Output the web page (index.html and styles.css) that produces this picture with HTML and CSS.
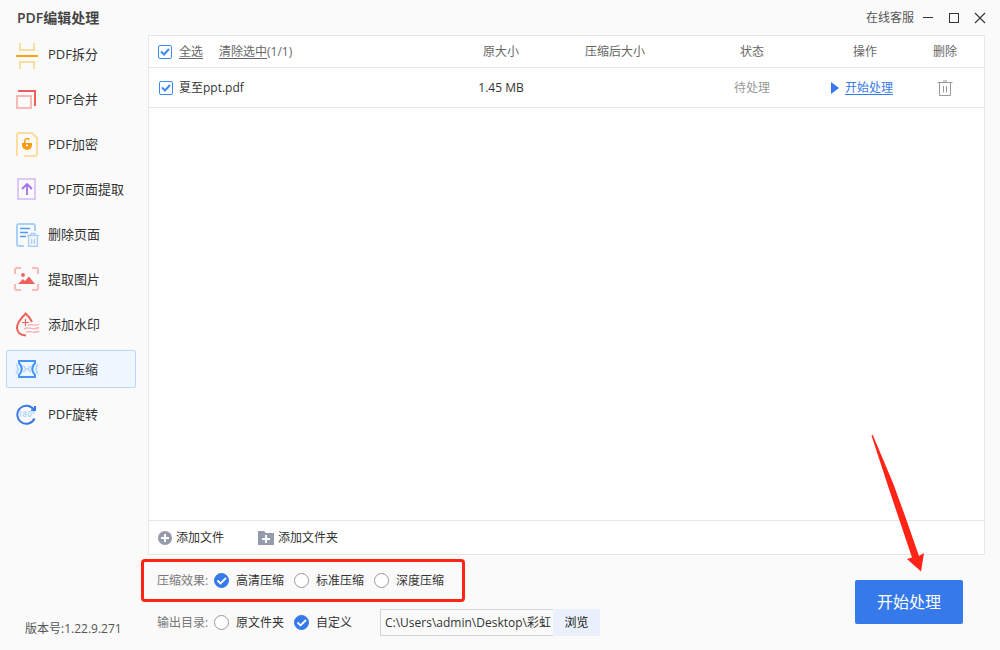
FILE: index.html
```html
<!DOCTYPE html>
<html lang="zh-CN">
<head>
<meta charset="utf-8">
<title>PDF编辑处理</title>
<link rel="stylesheet" href="styles.css">
</head>
<body>
<div class="app">
  <header class="titlebar">
    <h1 class="app-title">PDF编辑处理</h1>
    <div class="window-tools">
      <a class="support" href="#support">在线客服</a>
      <button class="win-btn" type="button" aria-label="最小化"><svg width="12" height="12" viewBox="0 0 12 12"><path d="M1 5.5H11" stroke="#333"/></svg></button>
      <button class="win-btn" type="button" aria-label="最大化"><svg width="12" height="12" viewBox="0 0 12 12"><rect x="1.5" y="1.5" width="9" height="9" fill="none" stroke="#333"/></svg></button>
      <button class="win-btn" type="button" aria-label="关闭"><svg width="12" height="12" viewBox="0 0 12 12"><path d="M1 1L11 11M11 1L1 11" stroke="#333" stroke-width="1.1"/></svg></button>
    </div>
  </header>

  <div class="body">
    <aside class="sidebar">
      <nav class="nav">
        <a class="nav-item" href="#split">
          <svg class="nav-icon" viewBox="0 0 26 28" fill="none" stroke-width="2"><path d="M6 3V10H20V3M6 29V22H20V29" stroke="#fddc9f"/><path d="M2 16H24" stroke="#fca311"/></svg>PDF拆分</a>
        <a class="nav-item" href="#merge">
          <svg class="nav-icon" viewBox="0 0 26 28" fill="none" stroke-width="2"><rect x="3" y="11" width="14" height="12" stroke="#f9b9b9"/><path d="M4 6H21V21" stroke="#ef5f59"/></svg>PDF合并</a>
        <a class="nav-item" href="#encrypt">
          <svg class="nav-icon" viewBox="0 0 26 28" fill="none"><path d="M3 26V5Q3 3 5 3H18L23 8V24Q23 26 21 26H10" stroke="#fddc9f" stroke-width="2"/><path d="M8 13H18V15A5 5 0 0 1 8 15Z" fill="#fb9a0b"/><path d="M10.7 13V11A2.4 2.4 0 0 1 15.3 10" stroke="#fb9a0b" stroke-width="1.5"/><circle cx="13" cy="15.5" r="1.1" fill="#fff"/></svg>PDF加密</a>
        <a class="nav-item" href="#extract">
          <svg class="nav-icon" viewBox="0 0 26 28" fill="none" stroke-width="2"><rect x="4" y="4" width="17" height="20" stroke="#dcc9f8"/><path d="M13 20V9M8 14L13 9L18 14" stroke="#a671ee" stroke-width="1.8"/></svg>PDF页面提取</a>
        <a class="nav-item" href="#delete">
          <svg class="nav-icon" viewBox="0 0 26 28" fill="none"><path d="M10 26H5Q3 26 3 24V6Q3 4 5 4H19Q21 4 21 6V11" stroke="#a9d0fb" stroke-width="2"/><path d="M6 8.5H16M6 12.5H14M6 16.5H12" stroke="#4b9df8" stroke-width="1.3"/><path d="M13 15.5H25M17 15V13.5H21V15M14.6 16V26.3H23.4V16M17.6 18.5V24M20.4 18.5V24" stroke="#a9d0fb" stroke-width="1.4"/></svg>删除页面</a>
        <a class="nav-item" href="#images">
          <svg class="nav-icon" viewBox="0 0 26 28" fill="none"><path d="M1 9V5Q1 3 3 3H7M18 3H22Q24 3 24 5V9M24 19V23Q24 25 22 25H18M7 25H3Q1 25 1 23V19" stroke="#f9b9b9" stroke-width="2"/><path d="M4 19L9 14L11 16L15 11.5L21 19Z" fill="#f0625c"/><circle cx="9" cy="10" r="1.9" fill="#f0625c"/></svg>提取图片</a>
        <a class="nav-item" href="#watermark">
          <svg class="nav-icon" viewBox="0 0 26 28" fill="none"><path d="M18 12Q15.5 7 11.7 3.5Q3 12 3 18Q3.5 25 12 25.5" stroke="#ee605a" stroke-width="2"/><path d="M11.5 9V16M8 12.5H15" stroke="#ee605a" stroke-width="1.2"/><path d="M14 15.5C17 12.5 20 17.5 25 14M10 19C15 16 18 21 25 17.5M12 22.5C16 19.5 19 24.5 25 21" stroke="#f9b5b5" stroke-width="1.5"/></svg>添加水印</a>
        <a class="nav-item active" href="#compress" aria-current="page">
          <svg class="nav-icon" viewBox="0 0 26 28" fill="none"><path d="M5 6H21V8Q15.5 14 21 20V22H5V20Q10.5 14 5 8Z" stroke="#4396f5" stroke-width="2"/><path d="M2 9Q6 14 2 19M24 9Q20 14 24 19" stroke="#b5d6fb" stroke-width="1.8"/><path d="M9.5 11L12 14L9.5 17M16.5 11L14 14L16.5 17M12 14H14" stroke="#a9d0fb" stroke-width="1.2"/></svg>PDF压缩</a>
        <a class="nav-item" href="#rotate">
          <svg class="nav-icon" viewBox="0 0 26 28" fill="none"><path d="M20.5 18.5A9 9 0 1 1 20 10" stroke="#3a78e8" stroke-width="2"/><path d="M22 6V11H17V9.5H20V6Z" fill="#3a78e8"/><text class="degree" x="4" y="17">180°</text></svg>PDF旋转</a>
      </nav>
      <p class="version">版本号:1.22.9.271</p>
    </aside>

    <main class="main">
      <section class="panel">
        <table class="files">
          <colgroup><col><col class="c-size"><col class="c-after"><col class="c-state"><col class="c-action"><col class="c-delete"></colgroup>
          <thead>
            <tr>
              <th class="name-cell"><div class="name-wrap"><input class="check" type="checkbox" id="all" checked><label class="underlined" for="all">全选</label><span class="clear-group"><a class="underlined" href="#clear">清除选中</a>(1/1)</span></div></th>
              <th>原大小</th><th>压缩后大小</th><th>状态</th><th>操作</th><th>删除</th>
            </tr>
          </thead>
          <tbody>
            <tr>
              <td class="name-cell"><div class="name-wrap file"><input class="check" type="checkbox" id="file1" checked><label for="file1">夏至ppt.pdf</label></div></td>
              <td>1.45 MB</td><td></td><td class="pending">待处理</td>
              <td><a class="run" href="#run"><svg width="8" height="12" viewBox="0 0 8 12"><path d="M0 0L8 6L0 12Z" fill="#3579ea"/></svg><span class="underlined">开始处理</span></a></td>
              <td><button class="trash" type="button" aria-label="删除"><svg width="16" height="16" viewBox="0 0 16 16" fill="none" stroke="#999"><path d="M.5 2.5H15.5M6 1H10M2.5 3V15.5H13.5V3M6.5 6V12.5M9.5 6V12.5"/></svg></button></td>
            </tr>
          </tbody>
        </table>
        <div class="add-bar">
          <button class="add-btn" type="button"><svg width="14" height="14" viewBox="0 0 14 14"><circle cx="7" cy="7" r="7" fill="#959bad"/><path d="M7 3V11M3 7H11" stroke="#fff" stroke-width="2"/></svg>添加文件</button>
          <button class="add-btn" type="button"><svg width="16" height="14" viewBox="0 0 16 14"><path d="M0 0H6L8 2H16V14H0Z" fill="#959bad"/><path d="M8 4V12M4 8H12" stroke="#fff" stroke-width="2"/></svg>添加文件夹</button>
        </div>
      </section>

      <div class="settings">
        <form class="options">
          <div class="option-row" role="radiogroup" aria-label="压缩效果">
            <span class="row-label">压缩效果:</span>
            <label class="choice"><input type="radio" name="quality" checked>高清压缩</label>
            <label class="choice"><input type="radio" name="quality">标准压缩</label>
            <label class="choice"><input type="radio" name="quality">深度压缩</label>
            <span class="highlight"></span>
          </div>
          <div class="option-row" role="radiogroup" aria-label="输出目录">
            <span class="row-label">输出目录:</span>
            <label class="choice"><input type="radio" name="output">原文件夹</label>
            <label class="choice"><input type="radio" name="output" checked>自定义</label>
            <div class="path"><input class="path-input" type="text" aria-label="输出路径" value="C:\Users\admin\Desktop\彩虹"><button class="browse" type="button">浏览</button></div>
          </div>
        </form>
        <div class="start-wrap">
          <button class="start" type="button">开始处理</button>
          <svg class="arrow" width="56" height="138" viewBox="0 0 56 138"><path d="M.5 .5Q1 -.5 2 .5L22 48L33 78L48 121L53 118L50 136.500L36 124L41 122.500L26 78L16 48Z" fill="#ff2416"/></svg>
        </div>
      </div>
    </main>
  </div>
</div>
</body>
</html>
```
FILE: styles.css
```css
* { box-sizing: border-box; }
body {
  margin: 0;
  background: #fafafa;
  color: #333;
  font: 12px/18px "Open Sans", "Noto Sans CJK SC", sans-serif;
}
button, input { font: inherit; color: inherit; }
button { padding: 0; border: 0; background: none; cursor: pointer; }
a { color: inherit; text-decoration: none; }
svg { display: block; flex: none; }

.app { display: flex; flex-direction: column; min-height: 100vh; }
.titlebar { display: flex; justify-content: space-between; align-items: center; height: 35px; padding: 0 14px 0 17px; }
.app-title { margin: 0; font-size: 14px; font-weight: 600; color: #444; }
.window-tools { display: flex; align-items: center; gap: 14px; }
.support { color: #555; margin-right: -6px; }

.body { display: flex; flex: 1; }
.sidebar { display: flex; flex-direction: column; justify-content: space-between; flex: 0 0 148px; padding: 0 12px 12px 6px; }
.nav { display: flex; flex-direction: column; gap: 7px; }
.nav-item { display: flex; align-items: center; gap: 8px; height: 38px; padding: 0 7px; border: 1px solid transparent; border-radius: 2px; font-size: 13px; white-space: nowrap; }
.nav-item.active { background: #eff6ff; border-color: #bad7fb; }
.nav-icon { width: 26px; height: 28px; overflow: visible; }
.degree { font-size: 8px; font-weight: 600; fill: #a9d0fb; }
.version { margin: 0 0 0 19px; color: #555; }

.main { display: flex; flex-direction: column; flex: 1; min-width: 0; padding-right: 15px; }
.panel { display: flex; flex-direction: column; justify-content: space-between; flex: 1; background: #fff; border: 1px solid #e6e6e6; }
.files { width: 100%; table-layout: fixed; border-collapse: separate; border-spacing: 0; }
.c-size { width: 98px; }
.c-after { width: 130px; }
.c-state { width: 144px; }
.c-action { width: 82px; }
.c-delete { width: 78px; }
.files th, .files td { padding: 0; text-align: center; border-bottom: 1px solid #e6e6e6; }
.files th { height: 32px; font-weight: 400; color: #666; }
.files td { height: 40px; }
.name-wrap { display: flex; align-items: center; gap: 7px; padding-left: 9px; }
.name-wrap.file { padding-left: 10px; gap: 6px; }
.clear-group { margin-left: 9px; }
.underlined { text-decoration: underline; text-underline-offset: 2px; }
.files .pending { color: #999; }
.run { display: flex; align-items: center; justify-content: center; gap: 6px; margin-right: 6px; color: #3579ea; }
.trash { display: block; margin: 0 auto; }

.check, .choice input { appearance: none; flex: none; margin: 0; background: #fff center / 100% no-repeat; }
.check {
  width: 14px; height: 14px; border: 1px solid #3d8af5; border-radius: 2px;
  background-image: url("data:image/svg+xml,%3Csvg xmlns='http://www.w3.org/2000/svg' viewBox='0 0 12 12'%3E%3Cpath d='M2 5.5L5 8.5L10 3' fill='none' stroke='%233d8af5' stroke-width='2'/%3E%3C/svg%3E");
}

.add-bar { display: flex; gap: 34px; height: 34px; padding-left: 9px; border-top: 1px solid #e6e6e6; }
.add-btn { display: flex; align-items: center; gap: 4px; }

.settings { display: flex; justify-content: space-between; height: 95px; padding: 5px 22px 0 9px; }
.options { display: flex; flex-direction: column; gap: 1px; }
.option-row { position: relative; display: flex; align-items: center; height: 41px; }
.row-label { width: 57px; color: #777; }
.choice { display: flex; align-items: center; gap: 7px; width: 80px; white-space: nowrap; }
.choice input { width: 15px; height: 15px; border: 1px solid #999; border-radius: 50%; }
.choice input:checked {
  border-color: #3579ea; background-color: #3579ea;
  background-image: url("data:image/svg+xml,%3Csvg xmlns='http://www.w3.org/2000/svg' viewBox='0 0 13 13'%3E%3Cpath d='M2.5 6.5L5.5 9.5L11 4' fill='none' stroke='%23fff' stroke-width='1.8'/%3E%3C/svg%3E");
}
.highlight { position: absolute; left: -16px; top: -1px; width: 324px; height: 43px; border: 3px solid #ff2416; border-radius: 4px; pointer-events: none; }
.path { display: flex; height: 27px; margin-left: 6px; }
.path-input { width: 173px; padding: 0 0 0 4px; border: 1px solid #d5d5d5; border-right: 0; background: #fafafa; }
.browse { width: 47px; background: #eaf1fd; color: #111; }

.start-wrap { position: relative; padding-top: 20px; }
.start { width: 108px; height: 44px; border-radius: 2px; background: #3579ea; color: #fff; font-size: 16px; }
.arrow { position: absolute; left: 16px; bottom: 77px; pointer-events: none; }
```
